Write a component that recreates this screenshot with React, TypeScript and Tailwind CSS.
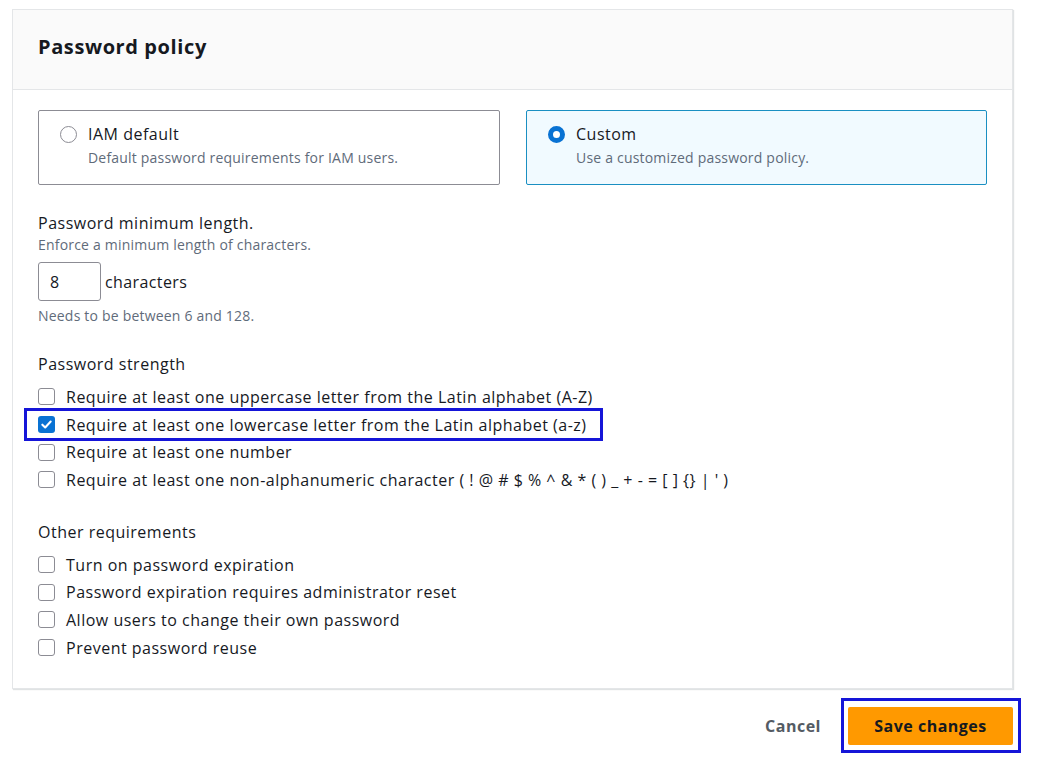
import React from 'react';

const strength = [
  { label: 'Require at least one uppercase letter from the Latin alphabet (A-Z)', checked: false },
  { label: 'Require at least one lowercase letter from the Latin alphabet (a-z)', checked: true, marked: true },
  { label: 'Require at least one number', checked: false },
  { label: "Require at least one non-alphanumeric character ( ! @ # $ % ^ & * ( ) _ + - = [ ] {} | ' )", checked: false },
];

const other = [
  'Turn on password expiration',
  'Password expiration requires administrator reset',
  'Allow users to change their own password',
  'Prevent password reuse',
];

function Checkbox({ checked }: { checked: boolean }) {
  if (checked) {
    return (
      <span className="shrink-0 w-[17px] h-[17px] rounded-[3px] bg-[#0972d3] flex items-center justify-center">
        <svg viewBox="0 0 14 14" className="w-[13px] h-[13px]">
          <path d="M2.5 7.2 L5.6 10.2 L11.5 3.8" fill="none" stroke="#fff" strokeWidth="2.2" strokeLinecap="round" strokeLinejoin="round" />
        </svg>
      </span>
    );
  }
  return <span className="shrink-0 w-[17px] h-[17px] rounded-[3px] border-[1.5px] border-[#8c8c94] bg-white" />;
}

function Row({ label, checked, marked }: { label: string; checked: boolean; marked?: boolean }) {
  return (
    <div className="relative flex items-center h-[27.7px] gap-[11px]">
      <Checkbox checked={checked} />
      <span className="text-[16px] tracking-[0.5px] text-[#16191f] whitespace-nowrap">{label}</span>
      {marked && (
        <span className="absolute left-[-14px] top-[-3px] bottom-[-3px] w-[579px] border-[3px] border-[#1515d8] pointer-events-none" />
      )}
    </div>
  );
}

function Tile({ title, desc, selected }: { title: string; desc: string; selected?: boolean }) {
  return (
    <div
      className={
        selected
          ? 'h-[75px] rounded-[2px] border border-[#1a8fc2] bg-[#f1faff] pl-[21px] pt-[12px] flex gap-[11px]'
          : 'h-[75px] rounded-[2px] border border-[#8c8c94] bg-white pl-[21px] pt-[12px] flex gap-[11px]'
      }
    >
      <div className="h-[22px] flex items-center">
        {selected ? (
          <span className="w-[17px] h-[17px] rounded-full border-[5px] border-[#0972d3] bg-white" />
        ) : (
          <span className="w-[17px] h-[17px] rounded-full border-[1.5px] border-[#8c8c94] bg-white" />
        )}
      </div>
      <div className="flex flex-col">
        <span className="text-[16px] leading-[22px] tracking-[0.5px] text-[#16191f]">{title}</span>
        <span className="mt-[3px] text-[14px] leading-[20px] tracking-[0.2px] text-[#5f6b7a]">{desc}</span>
      </div>
    </div>
  );
}

export default function App() {
  return (
    <div className="min-h-[761px] bg-white pl-[12px] pt-[9px] font-['Open_Sans',sans-serif]">
      <div className="w-[1001px] bg-white border border-[#e4e6e8] shadow-[1px_1px_1px_0_rgba(0,28,36,0.12)]">
        {/* Header */}
        <div className="h-[80px] bg-[#fafafa] border-b border-[#e4e6e8] px-[25px] flex items-center">
          <h2 className="text-[20px] font-bold tracking-[0.6px] text-[#16191f] pb-[5px]">Password policy</h2>
        </div>

        {/* Body */}
        <div className="px-[25px] pt-[20px] pb-[26px]">
          <div className="grid grid-cols-[462px_461px] gap-[26px]">
            <Tile title="IAM default" desc="Default password requirements for IAM users." />
            <Tile title="Custom" desc="Use a customized password policy." selected />
          </div>

          <div className="mt-[27px] text-[16px] leading-[22px] tracking-[0.5px] text-[#16191f]">Password minimum length.</div>
          <div className="text-[14px] leading-[22px] tracking-[0.2px] text-[#5f6b7a]">Enforce a minimum length of characters.</div>
          <div className="mt-[6px] flex items-center gap-[4px]">
            <div className="w-[63px] h-[39px] rounded-[3px] border border-[#8c8c94] pl-[11px] flex items-center text-[16px] text-[#16191f]">
              8
            </div>
            <span className="text-[16px] tracking-[0.4px] text-[#16191f]">characters</span>
          </div>
          <div className="mt-[5px] text-[14px] leading-[20px] tracking-[0.2px] text-[#5f6b7a]">Needs to be between 6 and 128.</div>

          <div className="mt-[27px] text-[16px] leading-[22px] tracking-[0.5px] text-[#16191f]">Password strength</div>
          <div className="mt-[8px] flex flex-col">
            {strength.map((s) => (
              <Row key={s.label} label={s.label} checked={s.checked} marked={s.marked} />
            ))}
          </div>

          <div className="mt-[27px] text-[16px] leading-[22px] tracking-[0.5px] text-[#16191f]">Other requirements</div>
          <div className="mt-[8px] flex flex-col">
            {other.map((o) => (
              <Row key={o} label={o} checked={false} />
            ))}
          </div>
        </div>
      </div>

      {/* Actions */}
      <div className="w-[1001px] mt-[18px] flex justify-end items-center gap-[27px]">
        <button className="text-[16px] font-bold tracking-[0.5px] text-[#545b64]">Cancel</button>
        <div className="relative">
          <button className="w-[165px] h-[38px] rounded-[2px] bg-[#ff9900] text-[16px] font-bold tracking-[0.5px] text-[#16191f]">
            Save changes
          </button>
          <span className="absolute left-[-7px] right-[-8px] top-[-9px] bottom-[-8px] border-[3px] border-[#1515d8] pointer-events-none" />
        </div>
      </div>
    </div>
  );
}
